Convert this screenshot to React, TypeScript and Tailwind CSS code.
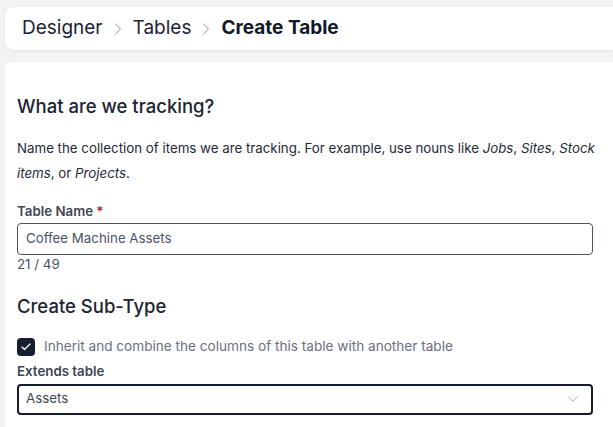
import { Check, ChevronDown, ChevronRight } from "lucide-react";

const font = { fontFamily: "Inter, 'Noto Sans', sans-serif" };

const Breadcrumb = () => {
  return (
    <div className="ml-[5px] mt-[7px] flex h-[43px] items-center rounded-l-lg bg-white pl-[17px] shadow-[0_1px_3px_rgba(0,0,0,0.08)]">
      <span className="text-[19px] text-[#1c2433]">Designer</span>
      <ChevronRight className="mx-[5px] h-5 w-5 text-[#9a8f8f]" strokeWidth={1.2} />
      <span className="text-[19px] text-[#1c2433]">Tables</span>
      <ChevronRight className="mx-[5px] h-5 w-5 text-[#9a8f8f]" strokeWidth={1.2} />
      <span className="text-[19px] font-bold text-[#111827]">Create Table</span>
    </div>
  );
};

export default function App() {
  return (
    <div className="h-[427px] w-[613px] overflow-hidden bg-[#f3f3f3]" style={font}>
      <Breadcrumb />
      <div className="ml-[5px] mt-[12px] h-[400px] rounded-tl-lg bg-white pl-[12px] pr-[15px] pt-[31px]">
        <h2 className="text-[18.5px] font-medium text-[#1c2433]">What are we tracking?</h2>
        <p className="mt-[15px] text-[13.3px] leading-[25px] text-[#1f2937]">
          Name the collection of items we are tracking. For example, use nouns like <i>Jobs</i>, <i>Sites</i>,{" "}
          <i>Stock</i>
          <br />
          <i>items</i>, or <i>Projects</i>.
        </p>
        <div className="mt-[16px] text-[13.3px] font-semibold text-[#3f4654]">
          Table Name <span className="text-[#a3243b]">*</span>
        </div>
        <div className="mr-[5px] mt-[1px] flex h-[32px] items-center rounded-[4px] border border-[#4b5568] px-[8px] text-[13.3px] text-[#4b5263]">
          Coffee Machine Assets
        </div>
        <div className="text-[13.3px] leading-[19px] text-[#4b5263]">21 / 49</div>
        <h2 className="mt-[19px] text-[18.5px] font-medium text-[#1c2433]">Create Sub-Type</h2>
        <label className="mt-[16px] flex items-center gap-[9px]">
          <span className="flex h-[18px] w-[18px] items-center justify-center rounded-[4px] bg-[#161d2e]">
            <Check className="h-[12px] w-[12px] text-white" strokeWidth={2.5} />
          </span>
          <span className="text-[13.6px] text-[#6b6f80]">Inherit and combine the columns of this table with another table</span>
        </label>
        <div className="mt-[5px] text-[13.3px] font-semibold text-[#3f4654]">Extends table</div>
        <div className="mr-[5px] mt-[2px] flex h-[31px] items-center justify-between rounded-[4px] border-2 border-[#161d2e] pl-[7px] pr-[9px] text-[13.3px] text-[#3f4654]">
          <span>Assets</span>
          <ChevronDown className="h-[18px] w-[18px] text-[#c9a99a]" strokeWidth={1.3} />
        </div>
      </div>
    </div>
  );
}
